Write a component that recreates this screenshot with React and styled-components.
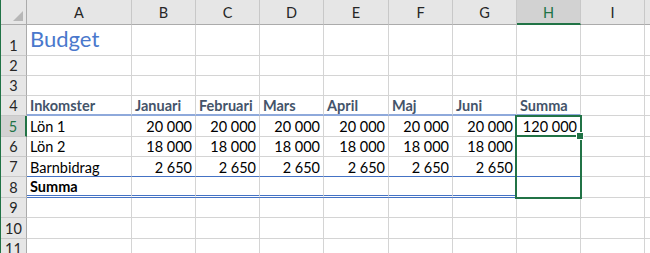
import React from 'react';
import styled, { createGlobalStyle } from 'styled-components';

const colors = {
  green: '#217346',
  grid: '#d4d4d4',
  headerBg: '#e6e6e6',
  headerSel: '#d2d2d2',
  headerLine: '#ababab',
  headerDivider: '#c8c8c8',
  text: '#000000',
  headerText: '#262626',
  slate: '#44546a',
  blue: '#4472c4',
  title: '#4a78cc',
  lightBlue: '#8ea9db',
};

const GlobalStyle = createGlobalStyle`
  html, body {
    margin: 0;
    padding: 0;
    background: #ffffff;
  }
  body {
    font-family: Lato, "Liberation Sans", sans-serif;
  }
`;

const Window = styled.div`
  position: relative;
  width: 650px;
  height: 253px;
  overflow: hidden;
  box-sizing: border-box;
  border-left: 1px solid ${colors.green};
  background: #fff;
`;

const Sheet = styled.div`
  display: grid;
  grid-template-columns: 26px 105px 64px 64px 64px 65px 64px 64px 64px 64px 1fr;
  grid-template-rows: 25px 31px 20px 20px 20px 21px 20px 20px 21px 20px 21px 20px;
`;

const Corner = styled.div`
  background: ${colors.headerBg};
  border-right: 1px solid ${colors.headerLine};
  border-bottom: 1px solid ${colors.headerLine};
  box-sizing: border-box;
  display: flex;
  align-items: flex-end;
  justify-content: flex-end;
  padding: 0 3px 3px 0;

  svg {
    display: block;
  }
`;

const ColHeader = styled.div`
  box-sizing: border-box;
  background: ${props => (props.selected ? colors.headerSel : colors.headerBg)};
  color: ${props => (props.selected ? colors.green : colors.headerText)};
  border-right: 1px solid ${colors.headerDivider};
  border-bottom: ${props => (props.selected ? `2px solid ${colors.green}` : `1px solid ${colors.headerLine}`)};
  display: flex;
  align-items: center;
  justify-content: center;
  font-size: 14.5px;
  padding-top: 1px;
`;

const RowHeader = styled.div`
  box-sizing: border-box;
  background: ${props => (props.selected ? colors.headerSel : colors.headerBg)};
  color: ${props => (props.selected ? colors.green : colors.headerText)};
  border-right: ${props => (props.selected ? `2px solid ${colors.green}` : `1px solid ${colors.headerLine}`)};
  border-bottom: 1px solid ${colors.headerDivider};
  display: flex;
  align-items: flex-end;
  justify-content: center;
  font-size: 14.5px;
  line-height: 17px;
  padding-bottom: 1px;
`;

const bottomBorders = {
  none: `1px solid ${colors.grid}`,
  thick: `2px solid ${colors.lightBlue}`,
  thin: `1px solid ${colors.blue}`,
  double: `3px double ${colors.blue}`,
};

const Cell = styled.div`
  box-sizing: border-box;
  border-right: 1px solid ${colors.grid};
  border-bottom: ${props => bottomBorders[props.line || 'none']};
  display: flex;
  align-items: flex-end;
  justify-content: ${props => (props.num ? 'flex-end' : 'flex-start')};
  padding: 0 3px ${props => (props.line === 'none' || !props.line ? 1 : 0)}px 3px;
  white-space: nowrap;
  overflow: visible;
  font-size: 14.5px;
  line-height: 17px;
  font-weight: ${props => (props.bold ? 700 : 400)};
  color: ${props => (props.slate ? colors.slate : colors.text)};
`;

const Title = styled.span`
  font-size: 22px;
  font-weight: 400;
  line-height: 26px;
  color: ${colors.title};
  padding-bottom: 2px;
`;

const Selection = styled.div`
  position: absolute;
  left: 514px;
  top: 115px;
  width: 67px;
  height: 84px;
  box-sizing: border-box;
  border: 2px solid ${colors.green};
  pointer-events: none;
`;

const ActiveLine = styled.div`
  position: absolute;
  left: 516px;
  top: 135px;
  width: 62px;
  height: 2px;
  background: ${colors.green};
`;

const FillHandle = styled.div`
  position: absolute;
  left: 575px;
  top: 132px;
  width: 6px;
  height: 6px;
  background: ${colors.green};
  border: 1px solid #fff;
`;

const columns = ['A', 'B', 'C', 'D', 'E', 'F', 'G', 'H', 'I', ''];
const months = ['Januari', 'Februari', 'Mars', 'April', 'Maj', 'Juni'];

const income = [
  { label: 'Lön 1', value: '20 000', sum: '120 000' },
  { label: 'Lön 2', value: '18 000' },
  { label: 'Barnbidrag', value: '2 650', line: 'thin' },
];

const blankRow = () => columns.map(() => ({}));

const buildRows = () => {
  const rows = [];
  const title = blankRow();
  title[0] = { title: 'Budget' };
  rows.push(title, blankRow(), blankRow());

  const head = blankRow();
  head[0] = { text: 'Inkomster', bold: true, slate: true, line: 'thick' };
  months.forEach((m, i) => {
    head[i + 1] = { text: m, bold: true, slate: true, line: 'thick' };
  });
  head[7] = { text: 'Summa', bold: true, slate: true, line: 'thick' };
  rows.push(head);

  income.forEach(item => {
    const row = blankRow();
    row[0] = { text: item.label, line: item.line };
    months.forEach((m, i) => {
      row[i + 1] = { text: item.value, num: true, line: item.line };
    });
    row[7] = { text: item.sum, num: true, line: item.line };
    rows.push(row);
  });

  const total = blankRow();
  total[0] = { text: 'Summa', bold: true, line: 'double' };
  for (let i = 1; i <= 6; i++) total[i] = { line: 'double' };
  rows.push(total, blankRow(), blankRow(), blankRow());
  return rows;
};

const rows = buildRows();

const App = () => {
  return (
    <Window>
      <GlobalStyle />
      <Sheet>
        <Corner>
          <svg width="10" height="10" viewBox="0 0 10 10">
            <polygon points="10,0 10,10 0,10" fill="#b7b7b7" />
          </svg>
        </Corner>
        {columns.map((c, i) => (
          <ColHeader key={'h' + i} selected={c === 'H'}>
            {c}
          </ColHeader>
        ))}

        {rows.map((row, r) => (
          <React.Fragment key={r}>
            <RowHeader selected={r === 4}>{r + 1}</RowHeader>
            {row.map((cell, c) => (
              <Cell
                key={c}
                num={cell.num}
                bold={cell.bold}
                slate={cell.slate}
                line={cell.line}
              >
                {cell.title ? <Title>{cell.title}</Title> : cell.text}
              </Cell>
            ))}
          </React.Fragment>
        ))}
      </Sheet>
      <Selection />
      <ActiveLine />
      <FillHandle />
    </Window>
  );
};

export default App;
